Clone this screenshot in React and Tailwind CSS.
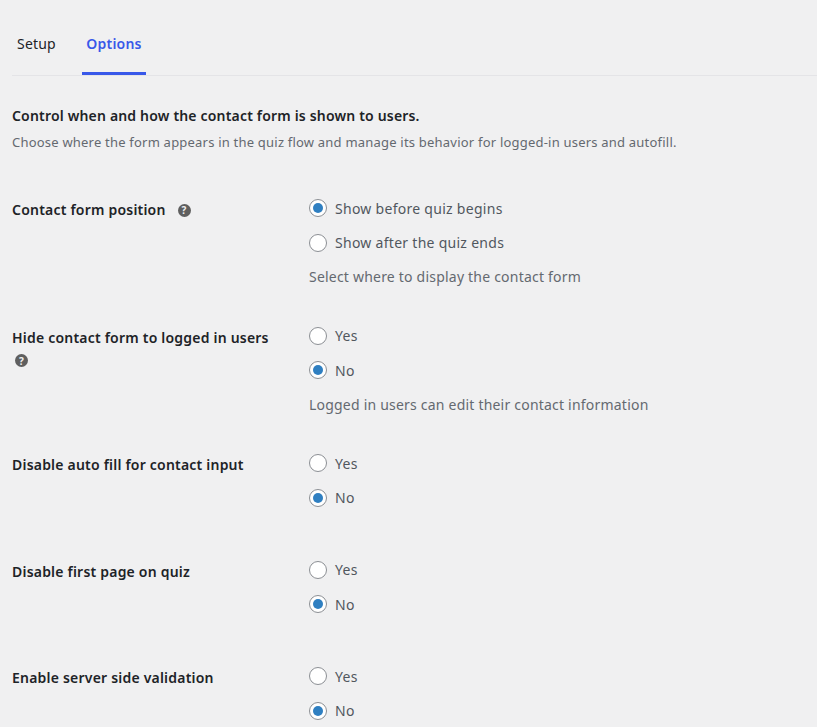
import React from 'react';

const HelpIcon = () => (
  <span className="inline-flex h-[13px] w-[13px] items-center justify-center rounded-full bg-[#5f5f5f] text-[10px] font-bold leading-none text-[#f0f0f1]">
    ?
  </span>
);

const Radio = ({ checked, label }) => (
  <label className="flex h-[18px] items-center gap-2">
    <span className="flex h-[18px] w-[18px] flex-shrink-0 items-center justify-center rounded-full border border-[#8c8f94] bg-white">
      {checked && <span className="h-[10px] w-[10px] rounded-full bg-[#2f7fc1]" />}
    </span>
    <span className="text-[14px] tracking-[0.28px] text-[#50575e]">{label}</span>
  </label>
);

const Row = ({ label, help, wrapHelp, options, note, className }) => (
  <div className={`flex ${className}`}>
    <div className="w-[297px] flex-shrink-0 pt-[1px] text-[14px] font-semibold leading-[20px] tracking-[0.21px] text-[#1d2327]">
      <div className="flex h-[20px] items-center">
        {label}
        {help && !wrapHelp && <span className="ml-[12px] flex"><HelpIcon /></span>}
      </div>
      {help && wrapHelp && <div className="mt-[3px] pl-[3px] leading-[18px]"><HelpIcon /></div>}
    </div>
    <div>
      <div className="flex flex-col gap-[16.5px]">
        {options.map((o) => (
          <Radio key={o.label} label={o.label} checked={o.checked} />
        ))}
      </div>
      {note && <p className="mt-[15.5px] text-[14px] leading-[20px] tracking-[0.21px] text-[#646970]">{note}</p>}
    </div>
  </div>
);

const yesNo = [{ label: 'Yes' }, { label: 'No', checked: true }];

export default function App() {
  return (
    <div className="h-[727px] overflow-hidden bg-[#f0f0f1] pl-[12px] font-['Noto_Sans',sans-serif]">
      <div className="flex h-[76px] items-end border-b border-[#e4e4e7]">
        <button className="h-[76px] w-[70px] pl-[5px] pt-[12px] text-left text-[14px] tracking-[0.2px] text-[#1d2327]">Setup</button>
        <button className="h-[76px] w-[64px] border-b-[3px] border-[#3858e9] pt-[15px] text-center text-[14px] font-semibold tracking-[0.2px] text-[#3858e9]">
          Options
        </button>
      </div>

      <h2 className="mt-[30px] text-[14px] font-semibold leading-[20px] tracking-[0.18px] text-[#1d2327]">
        Control when and how the contact form is shown to users.
      </h2>
      <p className="mt-[7px] text-[13px] leading-[18px] tracking-[0.21px] text-[#646970]">
        Choose where the form appears in the quiz flow and manage its behavior for logged-in users and autofill.
      </p>

      <Row
        className="mt-[48px]"
        label="Contact form position"
        help
        options={[{ label: 'Show before quiz begins', checked: true }, { label: 'Show after the quiz ends' }]}
        note="Select where to display the contact form"
      />
      <Row
        className="mt-[39.5px]"
        label="Hide contact form to logged in users"
        help
        wrapHelp
        options={yesNo}
        note="Logged in users can edit their contact information"
      />
      <Row className="mt-[39.5px]" label="Disable auto fill for contact input" options={yesNo} />
      <Row className="mt-[54px]" label="Disable first page on quiz" options={yesNo} />
      <Row className="mt-[54px]" label="Enable server side validation" options={yesNo} />
    </div>
  );
}
